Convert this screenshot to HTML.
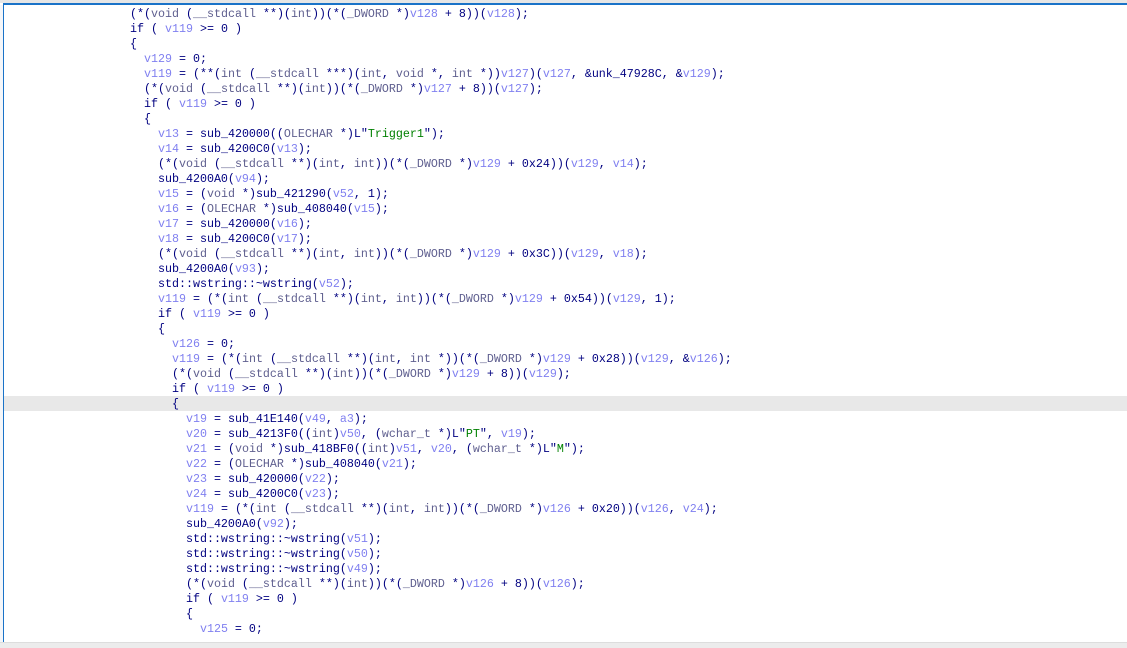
<!DOCTYPE html>
<html><head><meta charset="utf-8"><style>
html,body{margin:0;padding:0;width:1127px;height:648px;overflow:hidden;background:#fff;position:relative}
#top{position:absolute;left:0;top:0;width:1127px;height:3px;background:#e6e6e6}
#bl{position:absolute;left:3px;top:3px;width:1124px;height:2px;background:#1a73c8}
#lv{position:absolute;left:3px;top:3px;width:1px;height:639px;background:#1a73c8}
#gut{position:absolute;left:0;top:5px;width:3px;height:637px;background:#f4f6f9}
#bot{position:absolute;left:0;top:642px;width:1127px;height:6px;background:#ececec;border-top:1px solid #ddd}
#hl{position:absolute;left:4px;top:396px;width:1123px;height:15px;background:#e8e8e8}
#code{position:absolute;left:130px;top:7px;font-family:"Liberation Mono",monospace;font-size:11.67px;line-height:15px;color:#000080;white-space:pre}
.v{color:#8080f0}.t{color:#5f5f8f}.s{color:#008000}
</style></head><body>
<div id="top"></div><div id="gut"></div><div id="hl"></div><div id="bl"></div><div id="lv"></div><div id="bot"></div>
<div id="code">(*(<span class="t">void</span> (<span class="t">__stdcall</span> **)(<span class="t">int</span>))(*(<span class="t">_DWORD</span> *)<span class="v">v128</span> + 8))(<span class="v">v128</span>);
if ( <span class="v">v119</span> &gt;= 0 )
{
  <span class="v">v129</span> = 0;
  <span class="v">v119</span> = (**(<span class="t">int</span> (<span class="t">__stdcall</span> ***)(<span class="t">int</span>, <span class="t">void</span> *, <span class="t">int</span> *))<span class="v">v127</span>)(<span class="v">v127</span>, &amp;unk_47928C, &amp;<span class="v">v129</span>);
  (*(<span class="t">void</span> (<span class="t">__stdcall</span> **)(<span class="t">int</span>))(*(<span class="t">_DWORD</span> *)<span class="v">v127</span> + 8))(<span class="v">v127</span>);
  if ( <span class="v">v119</span> &gt;= 0 )
  {
    <span class="v">v13</span> = sub_420000((<span class="t">OLECHAR</span> *)L"<span class="s">Trigger1</span>");
    <span class="v">v14</span> = sub_4200C0(<span class="v">v13</span>);
    (*(<span class="t">void</span> (<span class="t">__stdcall</span> **)(<span class="t">int</span>, <span class="t">int</span>))(*(<span class="t">_DWORD</span> *)<span class="v">v129</span> + 0x24))(<span class="v">v129</span>, <span class="v">v14</span>);
    sub_4200A0(<span class="v">v94</span>);
    <span class="v">v15</span> = (<span class="t">void</span> *)sub_421290(<span class="v">v52</span>, 1);
    <span class="v">v16</span> = (<span class="t">OLECHAR</span> *)sub_408040(<span class="v">v15</span>);
    <span class="v">v17</span> = sub_420000(<span class="v">v16</span>);
    <span class="v">v18</span> = sub_4200C0(<span class="v">v17</span>);
    (*(<span class="t">void</span> (<span class="t">__stdcall</span> **)(<span class="t">int</span>, <span class="t">int</span>))(*(<span class="t">_DWORD</span> *)<span class="v">v129</span> + 0x3C))(<span class="v">v129</span>, <span class="v">v18</span>);
    sub_4200A0(<span class="v">v93</span>);
    std::wstring::~wstring(<span class="v">v52</span>);
    <span class="v">v119</span> = (*(<span class="t">int</span> (<span class="t">__stdcall</span> **)(<span class="t">int</span>, <span class="t">int</span>))(*(<span class="t">_DWORD</span> *)<span class="v">v129</span> + 0x54))(<span class="v">v129</span>, 1);
    if ( <span class="v">v119</span> &gt;= 0 )
    {
      <span class="v">v126</span> = 0;
      <span class="v">v119</span> = (*(<span class="t">int</span> (<span class="t">__stdcall</span> **)(<span class="t">int</span>, <span class="t">int</span> *))(*(<span class="t">_DWORD</span> *)<span class="v">v129</span> + 0x28))(<span class="v">v129</span>, &amp;<span class="v">v126</span>);
      (*(<span class="t">void</span> (<span class="t">__stdcall</span> **)(<span class="t">int</span>))(*(<span class="t">_DWORD</span> *)<span class="v">v129</span> + 8))(<span class="v">v129</span>);
      if ( <span class="v">v119</span> &gt;= 0 )
      {
        <span class="v">v19</span> = sub_41E140(<span class="v">v49</span>, <span class="v">a3</span>);
        <span class="v">v20</span> = sub_4213F0((<span class="t">int</span>)<span class="v">v50</span>, (<span class="t">wchar_t</span> *)L"<span class="s">PT</span>", <span class="v">v19</span>);
        <span class="v">v21</span> = (<span class="t">void</span> *)sub_418BF0((<span class="t">int</span>)<span class="v">v51</span>, <span class="v">v20</span>, (<span class="t">wchar_t</span> *)L"<span class="s">M</span>");
        <span class="v">v22</span> = (<span class="t">OLECHAR</span> *)sub_408040(<span class="v">v21</span>);
        <span class="v">v23</span> = sub_420000(<span class="v">v22</span>);
        <span class="v">v24</span> = sub_4200C0(<span class="v">v23</span>);
        <span class="v">v119</span> = (*(<span class="t">int</span> (<span class="t">__stdcall</span> **)(<span class="t">int</span>, <span class="t">int</span>))(*(<span class="t">_DWORD</span> *)<span class="v">v126</span> + 0x20))(<span class="v">v126</span>, <span class="v">v24</span>);
        sub_4200A0(<span class="v">v92</span>);
        std::wstring::~wstring(<span class="v">v51</span>);
        std::wstring::~wstring(<span class="v">v50</span>);
        std::wstring::~wstring(<span class="v">v49</span>);
        (*(<span class="t">void</span> (<span class="t">__stdcall</span> **)(<span class="t">int</span>))(*(<span class="t">_DWORD</span> *)<span class="v">v126</span> + 8))(<span class="v">v126</span>);
        if ( <span class="v">v119</span> &gt;= 0 )
        {
          <span class="v">v125</span> = 0;</div>
</body></html>
